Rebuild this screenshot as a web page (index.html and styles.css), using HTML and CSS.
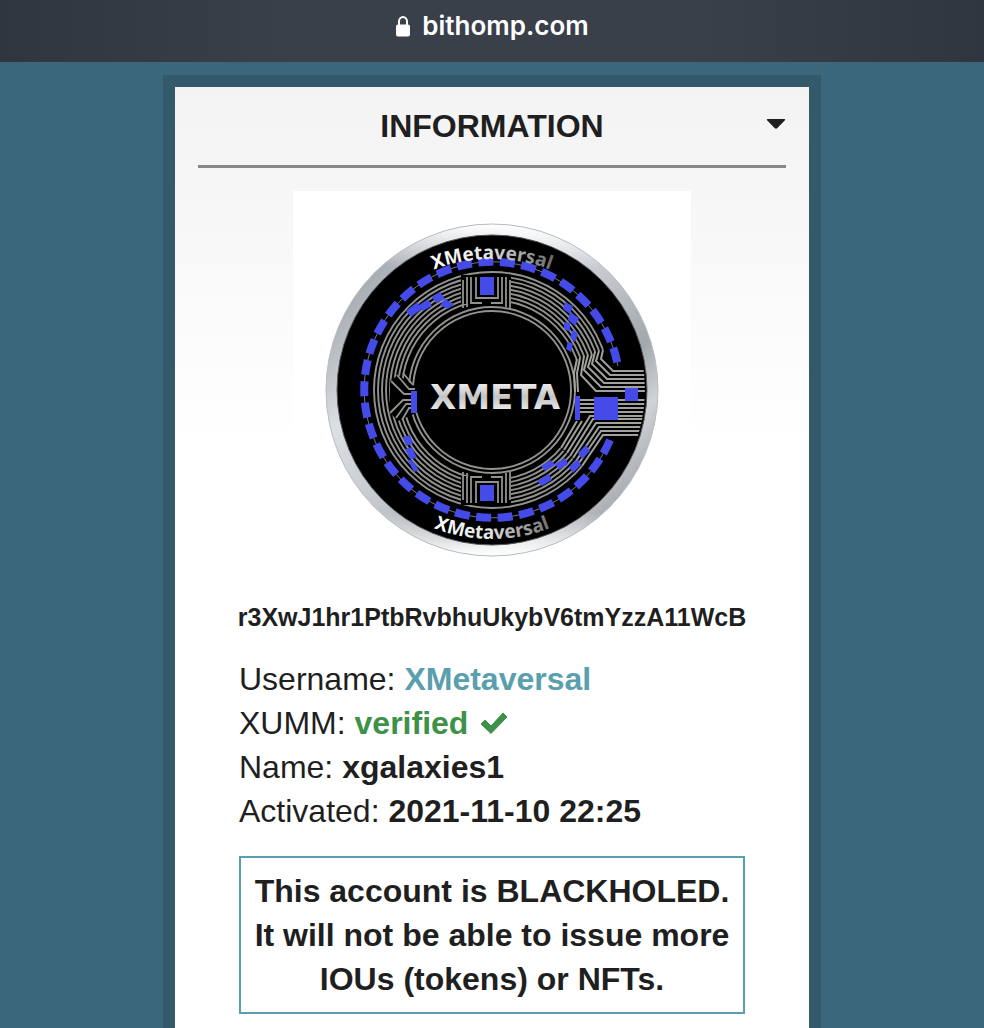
FILE: index.html
```html
<!DOCTYPE html>
<html lang="en">
<head>
    <meta charset="UTF-8">
    <meta name="viewport" content="width=device-width, initial-scale=1.0">
    <title>bithomp.com</title>
    <link rel="stylesheet" href="styles.css">
</head>
<body>
    <header class="topbar">
        <svg class="lock" viewBox="0 0 16 22" aria-hidden="true">
            <path d="M4 10V6.500a4 4.500 0 0 1 8 0V10" fill="none" stroke="#fff" stroke-width="2"/>
            <rect x="1" y="9.500" width="14" height="12" rx="2" fill="#fff"/>
        </svg>
        <span>bithomp.com</span>
    </header>

    <main class="card">
        <div class="card-head">
            <h1>INFORMATION</h1>
            <button class="toggle" type="button" aria-label="Toggle information">
                <svg viewBox="0 0 20 12"><path d="M2 1h16q2 0 .7 1.400l-7.300 7.600q-1.400 1.400-2.800 0L1.300 2.400Q0 1 2 1z" fill="#1f1f1f"/></svg>
            </button>
        </div>

        <svg class="avatar" viewBox="0 0 398 398" role="img" aria-label="XMETA coin">
            <defs>
                <linearGradient id="metal" x1="0" y1="0" x2="1" y2="1">
                    <stop offset="0" stop-color="#c9ccd2"/>
                    <stop offset=".15" stop-color="#a9adb4"/>
                    <stop offset=".32" stop-color="#dcdfe4"/>
                    <stop offset=".5" stop-color="#c4c8ce"/>
                    <stop offset=".66" stop-color="#a3a8ac"/>
                    <stop offset=".76" stop-color="#d0d4d7"/>
                    <stop offset=".87" stop-color="#a4a8ad"/>
                    <stop offset="1" stop-color="#e6e8ea"/>
                </linearGradient>
                <linearGradient id="shine" x1="0" y1="0" x2="0" y2="1">
                    <stop offset="0" stop-color="#fff"/>
                    <stop offset=".13" stop-color="#fff" stop-opacity="0"/>
                    <stop offset=".87" stop-color="#fff" stop-opacity="0"/>
                    <stop offset="1" stop-color="#fff"/>
                </linearGradient>
                <linearGradient id="fade" gradientUnits="userSpaceOnUse" x1="140" y1="0" x2="262" y2="0">
                    <stop offset="0" stop-color="#fff"/>
                    <stop offset=".45" stop-color="#e4e4e4"/>
                    <stop offset="1" stop-color="#666"/>
                </linearGradient>
                <linearGradient id="steel" x1="0" y1="0" x2="0" y2="1">
                    <stop offset="0" stop-color="#fff"/>
                    <stop offset=".5" stop-color="#c4c4c4"/>
                    <stop offset="1" stop-color="#fff"/>
                </linearGradient>
                <clipPath id="face"><circle cx="199" cy="199" r="153"/></clipPath>
                <path id="arc-top" d="M34 233a165 165 0 0 1 330 0"/>
                <path id="arc-bottom" d="M39 188a160 160 0 0 0 320 0"/>
            </defs>

            <rect width="398" height="398" fill="#fff"/>
            <circle cx="199" cy="199" r="166" fill="url(#metal)"/>
            <circle cx="199" cy="199" r="166" fill="url(#shine)" stroke="#b9bcc0"/>
            <circle cx="199" cy="199" r="155" fill="#000" stroke="#55585c"/>

            <g clip-path="url(#face)">
                <!-- circuit rings -->
                <g fill="none" stroke="#92928e" stroke-width="1.900">
                    <circle cx="199" cy="199" r="79"/>
                    <circle cx="199" cy="199" r="83"/>
                    <circle cx="199" cy="199" r="90"/>
                    <circle cx="199" cy="199" r="94"/>
                    <circle cx="199" cy="199" r="98"/>
                    <circle cx="199" cy="199" r="102"/>
                    <circle cx="199" cy="199" r="106"/>
                    <circle cx="199" cy="199" r="110"/>
                    <circle cx="199" cy="199" r="114"/>
                    <circle cx="199" cy="199" r="118"/>
                </g>

                <!-- gaps in the rings -->
                <path d="M168 84h50v29h-50zM168 285h50v29h-50zM97 190l8-6 18 12v26l-18 8-8-8z" fill="#000"/>
                <path d="M280 170l32-12 42 18v70l-42 4-21 27-26-22 18-36 2-20z" fill="#000"/>

                <g fill="none" stroke="#92928e" stroke-width="1.800">
                    <!-- top chip -->
                    <path d="M170 89v28M174 86v30M178 86v26h11M183 86v21h22V86M209 86v26h-11M213 86v30M217 89v28"/>
                    <!-- bottom chip -->
                    <path d="M170 309v-28M174 312v-30M178 312v-26h11M183 312v-21h22v21M209 312v-26h-11M213 312v-30M217 309v-28"/>
                    <!-- left connector -->
                    <path d="M104 184l12 14h6M98 190l13 13h11M110 182l10 12M122 209h-12l-13 13M122 213h-9l-10 14M122 217h-6l-7 12"/>
                </g>

                <!-- right connector -->
                <g fill="none" stroke="#a2a29c" stroke-width="2">
                    <path d="M310 159l-2 9 12 12h34M306 160l-3 10 14 14h37M302 161l-3 12 15 15h40M299 163l-4 13 16 16h43M295 164l-4 15 17 17h46M291 165l-3 19 15 16h51M287 167l-3 15 1 19M284 168l-3 14 1 19"/>
                    <path d="M286 209h68M286 213h68M286 217h68M286 221h68"/>
                    <path d="M289 275l21-31h44M286 272l22-32h46M283 270l23-34h48M280 267l23-35h51M277 265l23-37h54M274 262l23-37h57M271 259l18-29M268 257l16-27"/>
                </g>
            </g>

            <g fill="#444be8">
                <path d="M187 86h14v18h-14zM187 294h14v16h-14zM118 200h6v22h-6z"/>
                <path d="M301 206h24v23h-24zM332 197h13v13h-13zM282 205h5v24h-5z"/>
                <path d="M113 120l11-9 5 7-11 8zM126 114l9-6 4 7-9 5zM139 106l8-5 5 7-9 4zM152 108l9 5-6 5-8-4z"/>
                <path d="M272 111l8 4-3 8-7-5zM277 121l9 6-4 8-7-6zM271 131l6 1v9l-6-3zM280 138l5 5-3 8-5-5zM275 150l5 3-2 8-5-3z"/>
                <path d="M110 246l7-2 3 9-7 2zM112 258l7-2 5 11-7 1zM114 268l6 2 6 9-5 2z"/>
                <path d="M248 275l10-6 4 5-10 6zM262 273l10-6 3 6-9 6zM276 276l9-8 3 6-8 8zM285 262l8-8 4 6-8 8zM244 290l12-7 3 6-10 6z"/>
            </g>

            <!-- dashed ring -->
            <path d="M317 249A128 128 0 1 1 325 175" fill="none" stroke="#77788c"/>
            <path d="M317 249A128 128 0 1 1 325 175" fill="none" stroke="#444be8" stroke-width="8" stroke-dasharray="15 6.500"/>

            <text class="coin-edge" fill="url(#fade)" text-anchor="middle"><textPath href="#arc-top" startOffset="50%">XMetaversal</textPath></text>
            <text class="coin-edge" fill="url(#fade)" text-anchor="middle"><textPath href="#arc-bottom" startOffset="50%">XMetaversal</textPath></text>
            <text class="coin-name" x="202" y="218" fill="url(#steel)" text-anchor="middle">XMETA</text>
        </svg>

        <p class="address">r3XwJ1hr1PtbRvbhuUkybV6tmYzzA11WcB</p>

        <div class="details">
            <p>Username: <a href="#">XMetaversal</a></p>
            <p>XUMM: <b class="verified">verified
                <svg class="check" viewBox="0 0 28 22" aria-hidden="true"><path d="M1 12l4-4 6 6L23 1l4 4-16 16.500z" fill="#3d9148" stroke="#3d9148" stroke-linejoin="round"/></svg></b></p>
            <p>Name: <b>xgalaxies1</b></p>
            <p>Activated: <b>2021-11-10 22:25</b></p>
            <div class="notice">This account is BLACKHOLED. It will not be able to issue more IOUs (tokens) or NFTs.</div>
        </div>
    </main>
</body>
</html>
```
FILE: styles.css
```css
* {
    box-sizing: border-box;
    margin: 0;
    padding: 0;
}
body {
    display: flex;
    flex-direction: column;
    min-height: 100vh;
    background-color: #3b677c;
    color: #1f1f1f;
    font-family: "Liberation Sans", Arial, sans-serif;
    font-size: 32px;
    line-height: 44px;
}
.topbar {
    display: flex;
    align-items: center;
    justify-content: center;
    gap: 11px;
    height: 62px;
    padding-bottom: 10px;
    background: linear-gradient(90deg, #30363f, #3a404a 30%, #3a404a 70%, #30363f);
    color: #fff;
    font-family: Inter, sans-serif;
    font-size: 26px;
    font-weight: 600;
}
.lock {
    width: 16px;
    height: 22px;
}
.card {
    flex: 1;
    width: 100%;
    max-width: 658px;
    margin: 13px auto 0;
    padding: 0 23px 14px;
    border: 12px solid #33596b;
    border-bottom: 0;
    background: linear-gradient(#f3f3f3, #fff 360px);
}
.card-head {
    display: grid;
    grid-template-columns: 20px 1fr 20px;
    align-items: center;
    height: 81px;
    border-bottom: 3px solid #888;
}
.card-head h1 {
    grid-column: 2;
    font-size: 32px;
    text-align: center;
}
.toggle {
    height: 44px;
    padding-bottom: 4px;
    border: 0;
    background: none;
    cursor: pointer;
}
.toggle svg {
    display: block;
    width: 20px;
    height: 12px;
}
.avatar {
    display: block;
    width: 100%;
    max-width: 398px;
    margin: 23px auto 0;
}
.coin-edge {
    font-family: "Noto Sans", sans-serif;
    font-size: 19px;
    font-weight: 700;
}
.coin-name {
    font-family: "DejaVu Sans", sans-serif;
    font-size: 34px;
    font-weight: 700;
}
.address {
    margin-top: 6px;
    font-size: 25px;
    font-weight: 700;
    text-align: center;
}
.details {
    max-width: 506px;
    margin: 18px auto 0;
}
.details a {
    color: #5a9fae;
    font-weight: 700;
    text-decoration: none;
}
.verified {
    color: #3d9148;
}
.check {
    width: 28px;
    height: 22px;
    margin-left: 3px;
}
.notice {
    margin-top: 23px;
    padding: 11px;
    border: 2px solid #5a9fae;
    font-weight: 700;
    text-align: center;
}
```
